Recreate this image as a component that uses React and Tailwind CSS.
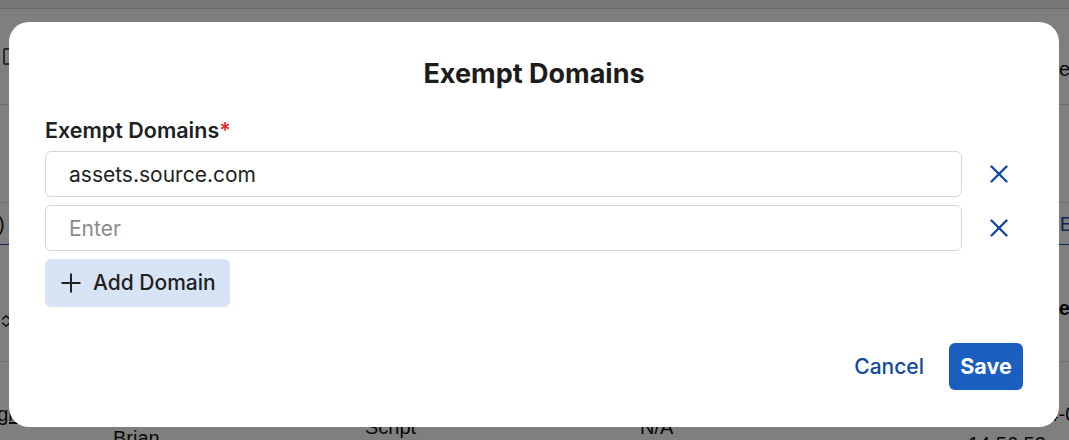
import { X, Plus, ChevronsUpDown } from "lucide-react"

const domains = ["assets.source.com", ""]

function BackgroundPage() {
    return (
        <div className="flex h-full w-full flex-col bg-white font-['Liberation_Sans',sans-serif] text-[20px] text-[#111]">
            {/* top bar */}
            <div className="h-[9px] shrink-0 border-b border-[#d4d4d4] bg-[#eeeeee]" />

            {/* toolbar row */}
            <div className="flex h-[96px] shrink-0 items-center justify-between border-b border-[#dcdcdc] pl-[3px]">
                <div className="h-[17px] w-[14px] rounded-[2px] border-2 border-[#555]" />
                <span className="-mr-[1px] mt-[24px]">Type</span>
            </div>

            <div className="h-[98px] shrink-0 border-b border-[#dcdcdc]" />

            {/* tabs row */}
            <div className="flex h-[42px] shrink-0 items-center justify-between border-b border-[#1a4fa0]">
                <span className="-ml-[2px]">)</span>
                <span className="-mr-[14px] text-[#1a4fa0]">Ex</span>
            </div>

            {/* header row */}
            <div className="flex h-[117px] shrink-0 items-center justify-between border-b border-[#dcdcdc]">
                <ChevronsUpDown size={16} strokeWidth={2} className="-ml-[2px] mt-[36px]" />
                <span className="-mr-[1px] mt-[10px] font-bold">Date</span>
            </div>

            {/* data row */}
            <div className="flex flex-1 items-start whitespace-nowrap">
                <div className="w-[113px] shrink-0">
                    <span className="-ml-[25px] mt-[37px] block underline">Login</span>
                </div>
                <div className="w-[252px] shrink-0">
                    <span className="mt-[61px] block">Brian</span>
                </div>
                <div className="w-[275px] shrink-0">
                    <span className="mt-[50px] block">Script</span>
                </div>
                <div className="w-[328px] shrink-0">
                    <span className="mt-[50px] block">N/A</span>
                </div>
                <div className="mt-[37px] flex shrink-0 flex-col">
                    <span className="ml-[46px]">2024-06-17</span>
                    <span>14:56:52</span>
                </div>
            </div>
        </div>
    )
}

export default function App() {
    return (
        <div className="relative h-[440px] w-[1069px] overflow-hidden">
            <BackgroundPage />

            {/* overlay */}
            <div className="absolute inset-0 bg-black/50">
                <div className="absolute left-[9px] top-[22px] flex h-[405px] w-[1050px] flex-col rounded-[20px] bg-white px-[36px] pt-[36px] pb-[37px] font-['Inter',sans-serif]">
                    <h2 className="text-center text-[27px] leading-[32px] font-bold text-[#1c1c1c]">
                        Exempt Domains
                    </h2>

                    <label className="mt-[26px] text-[21.5px] leading-[28px] font-semibold text-[#1f1f1f]">
                        Exempt Domains<span className="text-[#e0312b]">*</span>
                    </label>

                    <div className="mt-[7px] flex flex-col gap-[8px]">
                        {domains.map((d, i) => (
                            <div key={i} className="flex items-center gap-[13px]">
                                <input
                                    type="text"
                                    defaultValue={d}
                                    placeholder="Enter"
                                    className="h-[46px] w-[917px] rounded-[6px] border border-[#d6d6d6] px-[23px] text-[21px] text-[#1f1f1f] outline-none placeholder:text-[#8a8a8a]"
                                />
                                <button className="flex h-[40px] w-[48px] items-center justify-center text-[#0d47a1]">
                                    <X size={30} strokeWidth={1.9} />
                                </button>
                            </div>
                        ))}
                    </div>

                    <div className="mt-[8px]">
                        <button className="flex h-[48px] w-[185px] items-center gap-[7px] rounded-[6px] bg-[#d6e4f6] pl-[11px] text-[21px] font-medium text-[#222]">
                            <Plus size={30} strokeWidth={1.6} />
                            Add Domain
                        </button>
                    </div>

                    <div className="mt-auto flex items-center justify-end gap-[14px]">
                        <button className="px-[11px] text-[21px] font-medium text-[#124a9c]">Cancel</button>
                        <button className="h-[47px] w-[74px] rounded-[6px] bg-[#1a5fbf] text-[21.5px] font-bold text-white">
                            Save
                        </button>
                    </div>
                </div>
            </div>
        </div>
    )
}
